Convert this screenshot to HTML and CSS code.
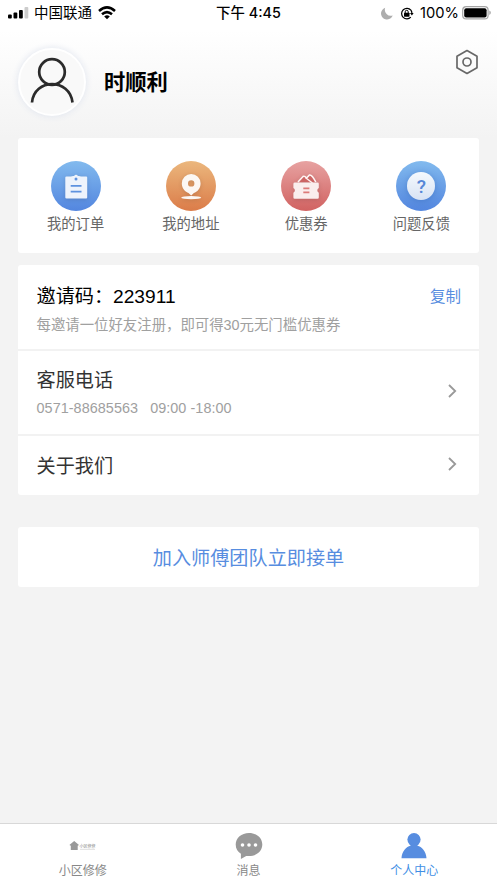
FILE: index.html
```html
<!DOCTYPE html>
<html lang="zh-CN">
<head>
<meta charset="utf-8">
<title>个人中心</title>
<link rel="stylesheet" href="styles.css">
</head>
<body>
<div class="app">
  <header class="status">
    <div class="status-left">
      <svg width="21" height="12" viewBox="0 0 21 12"><rect x="0" y="7.5" width="3.8" height="4" rx="1"/><rect x="5.5" y="5.6" width="3.8" height="5.9" rx="1"/><rect x="11" y="3" width="3.8" height="8.5" rx="1"/><rect x="16.5" y="0" width="3.8" height="11.5" rx="1" fill="#ccc"/></svg>
      <span class="carrier">中国联通</span>
      <svg class="wifi" width="18" height="14" viewBox="0 0 18 14" fill="none" stroke="#000" stroke-width="2.5"><path d="M1 5Q9-2.2 17 5M4 8.3Q9 4 14 8.3"/><path d="M6.2 10.4Q9 8.3 11.8 10.4L9 13.2Z" fill="#000" stroke="none"/></svg>
    </div>
    <div class="clock">下午 4:45</div>
    <div class="status-right">
      <svg width="12" height="13" viewBox="0 0 12 13"><path d="M4.2.8A6 6 0 1 0 11.7 8.5A6 6 0 0 1 4.2.8Z" fill="#adadad"/></svg>
      <svg class="lock" width="14" height="13" viewBox="0 0 14 13"><path d="M10.9 3.1A5.3 5.3 0 1 0 10.8 10.2M10.9 3.1Q12 4.6 11.9 6.7" fill="none" stroke="#000" stroke-width="1.2"/><path d="M10 6.1H13.6L11.9 8.5Z"/><rect x="4" y="5.7" width="5.5" height="4" rx=".6"/><path d="M5.2 6V4.8a1.5 1.5 0 0 1 3 0V6" fill="none" stroke="#000"/></svg>
      <span class="percent">100%</span>
      <svg width="29" height="14" viewBox="0 0 29 14"><rect x=".7" y=".7" width="25.4" height="12.2" rx="3.5" fill="none" stroke="#a5a5a5" stroke-width="1.2"/><rect x="2.2" y="2.2" width="22.4" height="9.2" rx="2"/><path d="M27.3 4.6Q28.8 5.2 28.8 6.8T27.3 9Z" fill="#a5a5a5"/></svg>
    </div>
  </header>

  <section class="profile">
    <div class="avatar"><svg width="60" height="60" viewBox="0 0 60 60" fill="none" stroke="#2b2b2b" stroke-width="2.7"><circle cx="30" cy="20" r="12.8"/><path d="M10 50.5C12 26 48 26 50.5 50.5"/></svg></div>
    <h1>时顺利</h1>
    <svg class="settings" width="24" height="26" viewBox="0 0 24 26" fill="none" stroke="#686868" stroke-width="1.7" stroke-linejoin="round"><path d="M12 1.5L22 7.2V18.8L12 24.5L2 18.8V7.2Z"/><circle cx="12" cy="13" r="4"/></svg>
  </section>

  <nav class="card shortcuts">
    <a class="shortcut"><span class="disc blue"><svg width="50" height="50" viewBox="0 0 50 50"><path d="M15.5 15.5H20Q21 14.8 23 15Q25 12.4 27 15Q29 14.8 30 15.5H35.2Q36.2 15.5 36.2 16.5V36.5Q36.2 37.5 35.2 37.5H15.5Q14.3 37.5 14.3 36.5V16.5Q14.3 15.5 15.5 15.5Z" fill="#edf3fc"/><circle cx="25" cy="18" r="1.5" fill="#5d92df"/><path d="M19.7 24.8H30.5M19.7 30.6H30.5" stroke="#5d92df" stroke-width="1.8"/></svg></span>我的订单</a>
    <a class="shortcut"><span class="disc orange"><svg width="50" height="50" viewBox="0 0 50 50" fill="#fcf7f3"><path fill-rule="evenodd" d="M25.2 13A9.4 9.4 0 0 0 15.8 22.4C15.8 27.5 19.5 30.8 22.5 32L25.2 34.5L27.9 32C31 30.8 34.6 27.5 34.6 22.4A9.4 9.4 0 0 0 25.2 13ZM25.2 19.2a3.2 3.2 0 1 1 0 6.4a3.2 3.2 0 0 1 0-6.4Z"/><ellipse cx="25.2" cy="36.7" rx="10" ry="1.6"/></svg></span>我的地址</a>
    <a class="shortcut"><span class="disc red"><svg width="50" height="50" viewBox="0 0 50 50"><path d="M17 21L22 15.5Q23.5 14.5 25.5 17L28.5 14Q31 13.5 34.8 21" fill="#cc6564" stroke="#fff4f3" stroke-width="1.6"/><path d="M24.3 16.5L31.5 22" stroke="#fff4f3" stroke-width="1.3"/><path d="M14 21.4H36.5Q37.8 21.4 37.8 22.7V27A2.6 2.6 0 0 0 37.8 31.7V36.5Q37.8 37.8 36.5 37.8H13.7Q12.4 37.8 12.4 36.5V31.7A2.6 2.6 0 0 0 12.4 27V22.7Q12.4 21.4 14 21.4Z" fill="#faeeed"/><path d="M22.3 27.3H28.4M22.3 31.4H28.4" stroke="#dc7b79" stroke-width="1.8"/></svg></span>优惠券</a>
    <a class="shortcut"><span class="disc blue"><b class="question">?</b></span>问题反馈</a>
  </nav>

  <main class="card list">
    <section class="row invite"><div><h2>邀请码：<span>223911</span></h2><p>每邀请一位好友注册，即可得30元无门槛优惠券</p></div><a class="copy">复制</a></section>
    <section class="row phone"><div><h2>客服电话</h2><p class="hours"><span>0571-88685563</span><span>09:00 -18:00</span></p></div><svg class="arrow" width="9" height="14" viewBox="0 0 9 14"><path d="M1 1L7.2 7L1 13"/></svg></section>
    <section class="row about"><h2>关于我们</h2><svg class="arrow" width="9" height="14" viewBox="0 0 9 14"><path d="M1 1L7.2 7L1 13"/></svg></section>
  </main>

  <a class="card join">加入师傅团队立即接单</a>

  <footer class="tabs">
    <a class="tab"><svg width="28" height="28" viewBox="0 0 28 28"><path d="M5.2 9L10 13L8.7 13.8V18H1.8V13.8L.4 13Z" fill="#999"/><text class="logo-text" x="10.6" y="15.8">小区修修</text><path d="M11 17.3H26" stroke="#bbb" stroke-width=".5"/></svg>小区修修</a>
    <a class="tab"><svg width="28" height="28" viewBox="0 0 28 28"><path d="M14 1C6.4 1 .7 6 .7 12.5C.7 16.6 2.7 19.8 5.9 21.8V27L11.2 23.9C20 25.2 27.3 20 27.3 12.5C27.3 6 21.6 1 14 1Z" fill="#999"/><g fill="#fff"><circle cx="7.5" cy="13" r="1.8"/><circle cx="14" cy="13" r="1.8"/><circle cx="20.5" cy="13" r="1.8"/></g></svg>消息</a>
    <a class="tab active"><svg width="28" height="28" viewBox="0 0 28 28" fill="#578de0"><circle cx="14" cy="7.6" r="6.6"/><path d="M1.5 26.3C1.8 19.4 6.4 14.5 10.5 13.8V12H17.5V13.8C21.6 14.5 26.2 19.4 26.5 26.3Z"/></svg>个人中心</a>
  </footer>
</div>
</body>
</html>
```
FILE: styles.css
```css
* { box-sizing: border-box; }
body {
  margin: 0;
  background: #f3f3f3;
  color: #333;
  font-family: "Liberation Sans", "Noto Sans CJK SC", sans-serif;
  font-weight: 400;
}
h1, h2, p { margin: 0; }
svg { display: block; flex-shrink: 0; }
.app {
  height: 883px;
  display: flex;
  flex-direction: column;
  background: linear-gradient(#fff 0, #fff 30px, #f3f3f3 138px);
}
.status {
  height: 26px;
  padding: 0 8px;
  display: grid;
  grid-template-columns: 1fr auto 1fr;
  align-items: center;
  color: #000;
  font-family: Inter, "Noto Sans CJK SC", sans-serif;
  font-size: 14.5px;
  line-height: 26px;
}
.status-left, .status-right { display: flex; align-items: center; }
.carrier { margin-left: 5px; }
.wifi { margin-left: 6px; }
.clock { font-weight: 500; font-size: 14.4px; }
.status-right { justify-content: flex-end; margin-right: -2px; }
.status-right svg:first-child { margin-right: 1px; }
.lock { margin-left: 6px; }
.percent { margin: 0 3px 0 6px; font-size: 14.7px; }
.profile {
  height: 112px;
  padding: 22px 18px 0;
  display: flex;
  align-items: flex-start;
}
.avatar {
  width: 68px;
  height: 68px;
  border: 2.5px solid #fff;
  border-radius: 50%;
  background: #f9f9f9;
  box-shadow: 0 0 7px #dfe4ee;
  display: grid;
  place-items: center;
}
.profile h1 {
  margin: 18px 0 0 18px;
  color: #000;
  font-size: 21.3px;
  line-height: 34px;
  font-weight: 700;
}
.settings { margin: 1px 0 0 auto; }
.card { margin: 0 18px; background: #fff; border-radius: 3px; }
.shortcuts { height: 115px; display: flex; }
.shortcut {
  flex: 1;
  padding-top: 23px;
  display: flex;
  flex-direction: column;
  align-items: center;
  color: #666;
  font-size: 14.3px;
  line-height: 27px;
}
.disc {
  width: 50px;
  height: 50px;
  border-radius: 50%;
  display: grid;
  place-items: center;
}
.disc svg { filter: drop-shadow(0 1px 2px #0002); }
.blue { background: linear-gradient(#82baee, #5386df); }
.orange { background: linear-gradient(#ebb77d, #db7c49); }
.red { background: linear-gradient(#e7a2a1, #d16261); }
.question {
  width: 28px;
  height: 28px;
  border-radius: 50%;
  background: linear-gradient(#f5f9fd, #d8e3f4);
  box-shadow: 0 1px 6px #2859a960;
  color: #5687d7;
  text-align: center;
  font: 500 19px/29px Roboto, sans-serif;
}
.list { margin-top: 12px; height: 230px; display: flex; flex-direction: column; }
.row { padding: 0 18px 0 18.5px; display: flex; justify-content: space-between; }
.row + .row { border-top: 2px solid #f2f2f2; }
.row h2 { font-size: 19.15px; line-height: 30px; font-weight: 400; }
.row p { font-size: 14.4px; line-height: 22px; color: #a0a0a0; }
.invite { height: 84px; padding-top: 17px; }
.invite h2 { color: #000; }
.invite p { margin-top: 2px; }
.copy { color: #578de0; font-size: 15.5px; line-height: 30px; }
.phone { height: 85px; padding-top: 15px; }
.phone p { margin-top: 1px; }
.hours { display: flex; gap: 12px; }
.hours span { letter-spacing: .06px; }
.arrow { fill: none; stroke: #999; stroke-width: 1.8; margin-right: 4px; }
.phone .arrow { margin-top: 18px; }
.about { height: 61px; padding-top: 16px; }
.about .arrow { margin-top: 5px; }
.join {
  margin-top: 32px;
  height: 60px;
  padding-top: 1px;
  color: #578de0;
  text-align: center;
  font-size: 19.15px;
  line-height: 61px;
}
.tabs {
  height: 60px;
  margin-top: auto;
  border-top: 1px solid #d8d8d8;
  background: #fff;
  display: flex;
}
.tab {
  flex: 1;
  padding-top: 8px;
  display: flex;
  flex-direction: column;
  align-items: center;
  color: #888;
  font-size: 12px;
  line-height: 23px;
}
.active { color: #3f8fe5; }
.logo-text { font-size: 4px; fill: #888; }
```
